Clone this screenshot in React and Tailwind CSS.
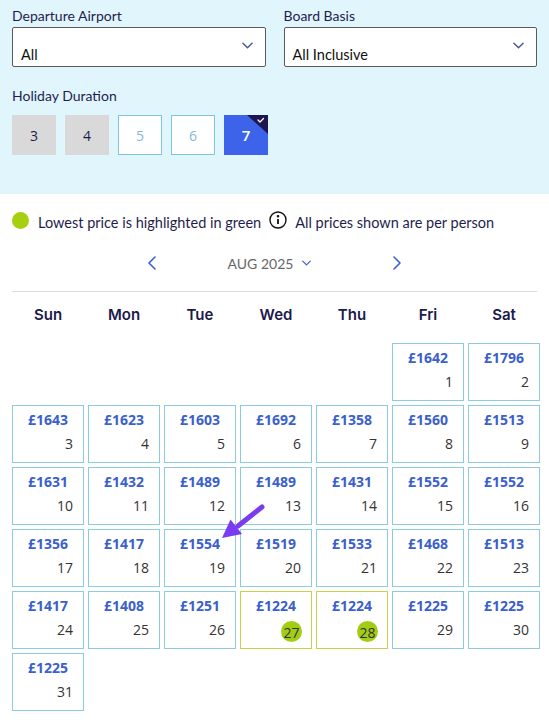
import React from "react";

const days = ["Sun", "Mon", "Tue", "Wed", "Thu", "Fri", "Sat"];

const prices = {
  1: 1642, 2: 1796, 3: 1643, 4: 1623, 5: 1603, 6: 1692, 7: 1358, 8: 1560, 9: 1513,
  10: 1631, 11: 1432, 12: 1489, 13: 1489, 14: 1431, 15: 1552, 16: 1552,
  17: 1356, 18: 1417, 19: 1554, 20: 1519, 21: 1533, 22: 1468, 23: 1513,
  24: 1417, 25: 1408, 26: 1251, 27: 1224, 28: 1224, 29: 1225, 30: 1225, 31: 1225,
};

const lowest = [27, 28];

const Chevron = ({ dir = "down", className = "" }) => {
  const d = {
    down: "M1 1l5 5 5-5",
    left: "M7 1L1 7l6 6",
    right: "M1 1l6 6-6 6",
  }[dir];
  const vb = dir === "down" ? "0 0 12 7" : "0 0 8 14";
  return (
    <svg viewBox={vb} className={className} fill="none" stroke="currentColor" strokeWidth="1.6" strokeLinecap="round" strokeLinejoin="round">
      <path d={d} />
    </svg>
  );
};

const Select = ({ label, value }) => (
  <div>
    <div className="h-[20px] leading-[20px] text-[14px] text-[#1f1d4e]">{label}</div>
    <div className="mt-[1px] h-[40px] border border-[#5a5a5a] rounded-[2px] bg-white flex items-end justify-between pl-[8px] pr-[12px] pb-[1px]">
      <span className="text-[14.5px] text-[#111] leading-[20px]">{value}</span>
      <Chevron dir="down" className="w-[11px] h-[7px] text-[#4b5a95] mb-[16px]" />
    </div>
  </div>
);

const Cell = ({ day }) => {
  const low = lowest.includes(day);
  return (
    <div className={`h-[58px] border bg-white pt-[4px] ${low ? "border-[#c6d34a]" : "border-[#8ccbe0]"}`} style={{ fontFamily: "'Open Sans', sans-serif" }}>
      <div className="text-center text-[14px] leading-[20px] font-bold text-[#3b5fcc]">£{prices[day]}</div>
      <div className="flex justify-end pr-[10px] mt-[4px]">
        {low ? (
          <span className="w-[21px] h-[21px] rounded-full bg-[#a3cc14] text-[14px] leading-[24px] text-center text-[#333] mt-[1px] -mr-[1px]">{day}</span>
        ) : (
          <span className="text-[14px] leading-[20px] text-[#333]">{day}</span>
        )}
      </div>
    </div>
  );
};

export default function App() {
  const cells = [];
  for (let i = 0; i < 5; i++) cells.push(null);
  for (let d = 1; d <= 31; d++) cells.push(d);

  return (
    <div className="relative w-[549px] h-[722px] bg-white overflow-hidden" style={{ fontFamily: "Lato, 'Open Sans', sans-serif" }}>
      <div className="bg-[#e1f5fd] px-3 pt-[6px] pb-[39px]">
        <div className="grid grid-cols-2 gap-[18px]">
          <Select label="Departure Airport" value="All" />
          <Select label="Board Basis" value="All Inclusive" />
        </div>
        <div className="mt-[19px] h-[20px] leading-[20px] text-[14px] text-[#1f1d4e]">Holiday Duration</div>
        <div className="mt-[9px] flex gap-[9px]" style={{ fontFamily: "'Open Sans', sans-serif" }}>
          <div className="w-[44px] h-[40px] bg-[#d9d9d9] flex items-center justify-center text-[14px] text-[#1f1d4e]">3</div>
          <div className="w-[44px] h-[40px] bg-[#d9d9d9] flex items-center justify-center text-[14px] text-[#1f1d4e]">4</div>
          <div className="w-[44px] h-[40px] bg-white border border-[#7cc6df] flex items-center justify-center text-[14px] text-[#7dbcd9]">5</div>
          <div className="w-[44px] h-[40px] bg-white border border-[#7cc6df] flex items-center justify-center text-[14px] text-[#7dbcd9]">6</div>
          <div className="relative w-[44px] h-[40px] bg-[#3d63ea] flex items-center justify-center text-[15px] font-semibold text-white overflow-hidden">
            7
            <svg className="absolute top-0 right-0 w-[21px] h-[19px]" viewBox="0 0 21 19">
              <polygon points="0,0 21,0 21,19" fill="#1c1552" />
              <path d="M11 5l2 2 3.5-3.5" fill="none" stroke="white" strokeWidth="1.3" strokeLinecap="round" strokeLinejoin="round" />
            </svg>
          </div>
        </div>
      </div>

      <div className="px-3 mt-[18px] flex items-center h-[22px] text-[14.5px] text-[#1f1d4e]">
        <span className="w-[17px] h-[17px] rounded-full bg-[#a6cf10] -mt-[6px]"></span>
        <span className="ml-[9px]">Lowest price is highlighted in green</span>
        <svg className="ml-[8px] w-[18px] h-[18px] -mt-[6px]" viewBox="0 0 18 18" fill="none" stroke="#111" strokeWidth="1.4">
          <circle cx="9" cy="9" r="8" />
          <path d="M9 8v5" strokeWidth="1.8" />
          <circle cx="9" cy="5.2" r="0.6" fill="#111" />
        </svg>
        <span className="ml-[8px]">All prices shown are per person</span>
      </div>

      <div className="mt-[18px] flex items-center justify-center h-[22px]">
        <Chevron dir="left" className="w-[8px] h-[14px] text-[#3b5fcc]" />
        <div className="ml-[72px] flex items-center">
          <span className="text-[14px] text-[#666]">AUG 2025</span>
          <Chevron dir="down" className="ml-[9px] w-[9px] h-[6px] text-[#3b5fcc]" />
        </div>
        <Chevron dir="right" className="ml-[82px] w-[8px] h-[14px] text-[#3b5fcc]" />
      </div>

      <div className="mx-3 mt-[17px] h-px bg-[#dcdcdc] w-[525px]"></div>

      <div className="ml-3 w-[528px] grid grid-cols-7 gap-x-[4px] h-[46px] items-center">
        {days.map((d) => (
          <div key={d} className="text-center text-[15px] font-semibold text-[#1c1a4b]" style={{ fontFamily: "Inter, sans-serif" }}>{d}</div>
        ))}
      </div>

      <div className="ml-3 mt-[5px] w-[528px] grid grid-cols-7 gap-[4px]">
        {cells.map((d, i) => (d ? <Cell key={i} day={d} /> : <div key={i} className="h-[58px]"></div>))}
      </div>

      <svg className="absolute left-[215px] top-[500px] w-[55px] h-[45px]" viewBox="215 500 55 45">
        <path d="M262 507L238 526" stroke="#7a3cf0" strokeWidth="5" strokeLinecap="round" />
        <polygon points="222,538 230.5,519.5 242,534" fill="#7a3cf0" />
      </svg>
    </div>
  );
}
